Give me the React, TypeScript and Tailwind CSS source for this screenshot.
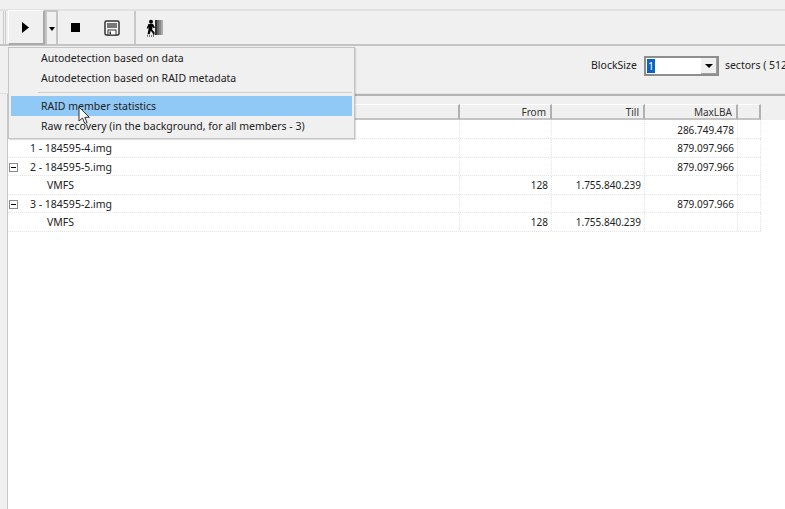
const rows = [
  { name: '', indent: 0, from: '', till: '', lba: '286.749.478', tree: false },
  { name: '1 - 184595-4.img', indent: 30, from: '', till: '', lba: '879.097.966', tree: false },
  { name: '2 - 184595-5.img', indent: 30, from: '', till: '', lba: '879.097.966', tree: true },
  { name: 'VMFS', indent: 47, from: '128', till: '1.755.840.239', lba: '', tree: false },
  { name: '3 - 184595-2.img', indent: 30, from: '', till: '', lba: '879.097.966', tree: true },
  { name: 'VMFS', indent: 47, from: '128', till: '1.755.840.239', lba: '', tree: false },
];

const dotted = 'border-r border-dotted border-[#e4e4e4]';

function Row({ row }: { row: (typeof rows)[number] }) {
  return (
    <div className="flex h-[18.5px] items-center border-b border-dotted border-[#e4e4e4]">
      <div className={`relative h-full w-[452px] leading-[18px] ${dotted}`}>
        {row.tree && (
          <span className="absolute top-[5px] left-[1px] flex h-[9px] w-[9px] items-center justify-center border border-[#8a8a8a] bg-white">
            <span className="h-px w-[5px] bg-black" />
          </span>
        )}
        <span className="absolute top-0" style={{ left: row.indent - 8 }}>
          {row.name}
        </span>
      </div>
      <div className={`h-full w-[92px] pr-[3px] text-right text-[10px] leading-[18px] ${dotted}`}>{row.from}</div>
      <div className={`h-full w-[93px] pr-[3px] text-right text-[10px] leading-[18px] ${dotted}`}>{row.till}</div>
      <div className={`h-full w-[93px] pr-[3px] text-right text-[10px] leading-[18px] ${dotted}`}>{row.lba}</div>
      <div className={`h-full w-[23px] ${dotted}`} />
    </div>
  );
}

function HeaderCell({ label, width }: { label?: string; width: string }) {
  return (
    <div
      className={`h-full ${width} border-r-2 border-b-2 border-r-[#b0b0b0] border-b-[#c4c4c4] border-t border-t-white pr-[4px] text-right text-[10px] leading-[14px] text-[#333]`}
    >
      {label}
    </div>
  );
}

export default function App() {
  return (
    <div className="relative h-[509px] w-[785px] overflow-hidden bg-[#f0f0f0] font-['Noto_Sans',sans-serif] text-[10.5px] text-[#222]">
      {/* Toolbar */}
      <div className="mt-[9px] flex h-[37px] items-center border-t-2 border-b-2 border-t-[#e2e2e2] border-b-[#c4c4c4] pl-[3px]">
        <div className="mr-[2px] h-[33px] w-[3px] border-x border-[#c8c8c8]" />
        <button className="flex h-[35px] w-[37px] items-center justify-center border-r-2 border-b-2 border-[#a9a9a9] border-t border-l border-t-white border-l-white">
          <svg className="-ml-[1px]" width="7" height="11" viewBox="0 0 7 11">
            <path d="M0 0l7 5.500-7 5.500z" fill="#000" />
          </svg>
        </button>
        <button className="flex h-[35px] w-[13px] items-center justify-center border-x-2 border-t-2 border-x-[#c4c4c4] border-t-[#c4c4c4]">
          <span className="h-0 w-0 border-x-[3.5px] border-t-[4px] border-x-transparent border-t-black" />
        </button>
        <div className="ml-[13px] h-[9px] w-[9px] bg-black" />
        <svg className="ml-[24px]" width="16" height="16" viewBox="0 0 16 16">
          <path d="M1 2.500a1.500 1.500 0 0 1 1.500-1.500h11a1.500 1.500 0 0 1 1.500 1.500v11a1.500 1.500 0 0 1-1.500 1.500h-11a1.500 1.500 0 0 1-1.500-1.500z" fill="#f4f4f4" stroke="#333" strokeWidth="1.500" />
          <rect x="3" y="3" width="10" height="5" fill="#777" />
          <rect x="4" y="10" width="8" height="5" fill="#fff" stroke="#333" />
          <rect x="5.500" y="11.500" width="1.500" height="3" fill="#333" />
        </svg>
        <div className="ml-[14px] h-[33px] w-[2px] bg-[#c8c8c8]" />
        <svg className="ml-[10px]" width="18" height="18" viewBox="0 0 18 18">
          <rect x="9" y="1" width="2" height="15" fill="#333" />
          <rect x="11" y="1" width="2" height="15" fill="#666" />
          <rect x="13" y="1" width="2" height="15" fill="#888" />
          <rect x="15" y="1" width="2" height="15" fill="#aaa" />
          <circle cx="5" cy="2.800" r="2" fill="#000" />
          <path d="M2.500 5h4.500l2 3.500-1.400.8-1.100-1.600-.3 3 2.300 2.500v2.500H7l-.5-2-1.800-2-1 3.500H1.500l1-5V8.200L1.800 9.800 .6 9.200z" fill="#000" />
          <path d="M1 17h1M3 17h1M5 17h1M7 17h1" stroke="#000" strokeWidth="1" />
        </svg>
      </div>

      {/* BlockSize bar */}
      <div className="flex h-[48px] items-start justify-end border-b border-[#e2e2e2]">
        <div className="mt-[10px] flex shrink-0 items-center translate-x-[37px]">
          <span className="mr-[7px]">BlockSize</span>
          <div className="flex h-[20px] w-[75px] border-2 border-[#8e8e8e] bg-white">
            <div className="flex flex-1 items-center pl-[1px]">
              <span className="bg-[#0a64c8] px-[1px] leading-[14px] text-white">1</span>
            </div>
            <div className="flex w-[16px] items-center justify-center bg-[#f0f0f0] shadow-[inset_-1px_-1px_0_#a0a0a0]">
              <span className="h-0 w-0 border-x-[4px] border-t-[4px] border-x-transparent border-t-black" />
            </div>
          </div>
          <span className="ml-[6px] whitespace-nowrap">sectors ( 512 bytes )</span>
        </div>
      </div>

      {/* Table */}
      <div className="ml-[7px] h-[415px] border-t-2 border-l border-t-[#b4b4b4] border-l-[#c8c8c8] bg-white">
        <div className="h-[8px] bg-[#f0f0f0]" />
        <div className="flex h-[16px] bg-[#f0f0f0]">
          <HeaderCell width="w-[452px]" />
          <HeaderCell label="From" width="w-[92px]" />
          <HeaderCell label="Till" width="w-[93px]" />
          <HeaderCell label="MaxLBA" width="w-[93px]" />
          <HeaderCell width="w-[23px]" />
        </div>
        <div className="w-[753px] pt-[0.5px]">
          {rows.map((row, i) => (
            <Row key={i} row={row} />
          ))}
        </div>
      </div>

      {/* Dropdown menu */}
      <div className="absolute top-[47px] left-[8px] w-[347px] border border-[#c4c4c4] bg-[#f0f0f0] shadow-[1px_1px_1px_rgba(0,0,0,0.12)]">
        <div className="h-[20px] pl-[32px] leading-[20px]">Autodetection based on data</div>
        <div className="h-[20px] pl-[32px] leading-[20px]">Autodetection based on RAID metadata</div>
        <div className="mt-[4px] mr-[2px] mb-[3px] ml-[29px] h-px bg-[#cfcfcf]" />
        <div className="mx-[2px] h-[20px] bg-[#90c8f6] pl-[30px] leading-[20px]">RAID member statistics</div>
        <div className="h-[20px] pl-[32px] leading-[20px]">Raw recovery (in the background, for all members - 3)</div>
        <div className="h-[2px]" />
      </div>

      {/* Mouse cursor */}
      <svg className="absolute top-[106px] left-[78px]" width="13" height="19" viewBox="0 0 13 19">
        <path d="M1 1v14l3.500-3 2.300 5.500 2.300-1-2.300-5.200h4.500z" fill="#fff" stroke="#333" strokeWidth="1" />
      </svg>
    </div>
  );
}
